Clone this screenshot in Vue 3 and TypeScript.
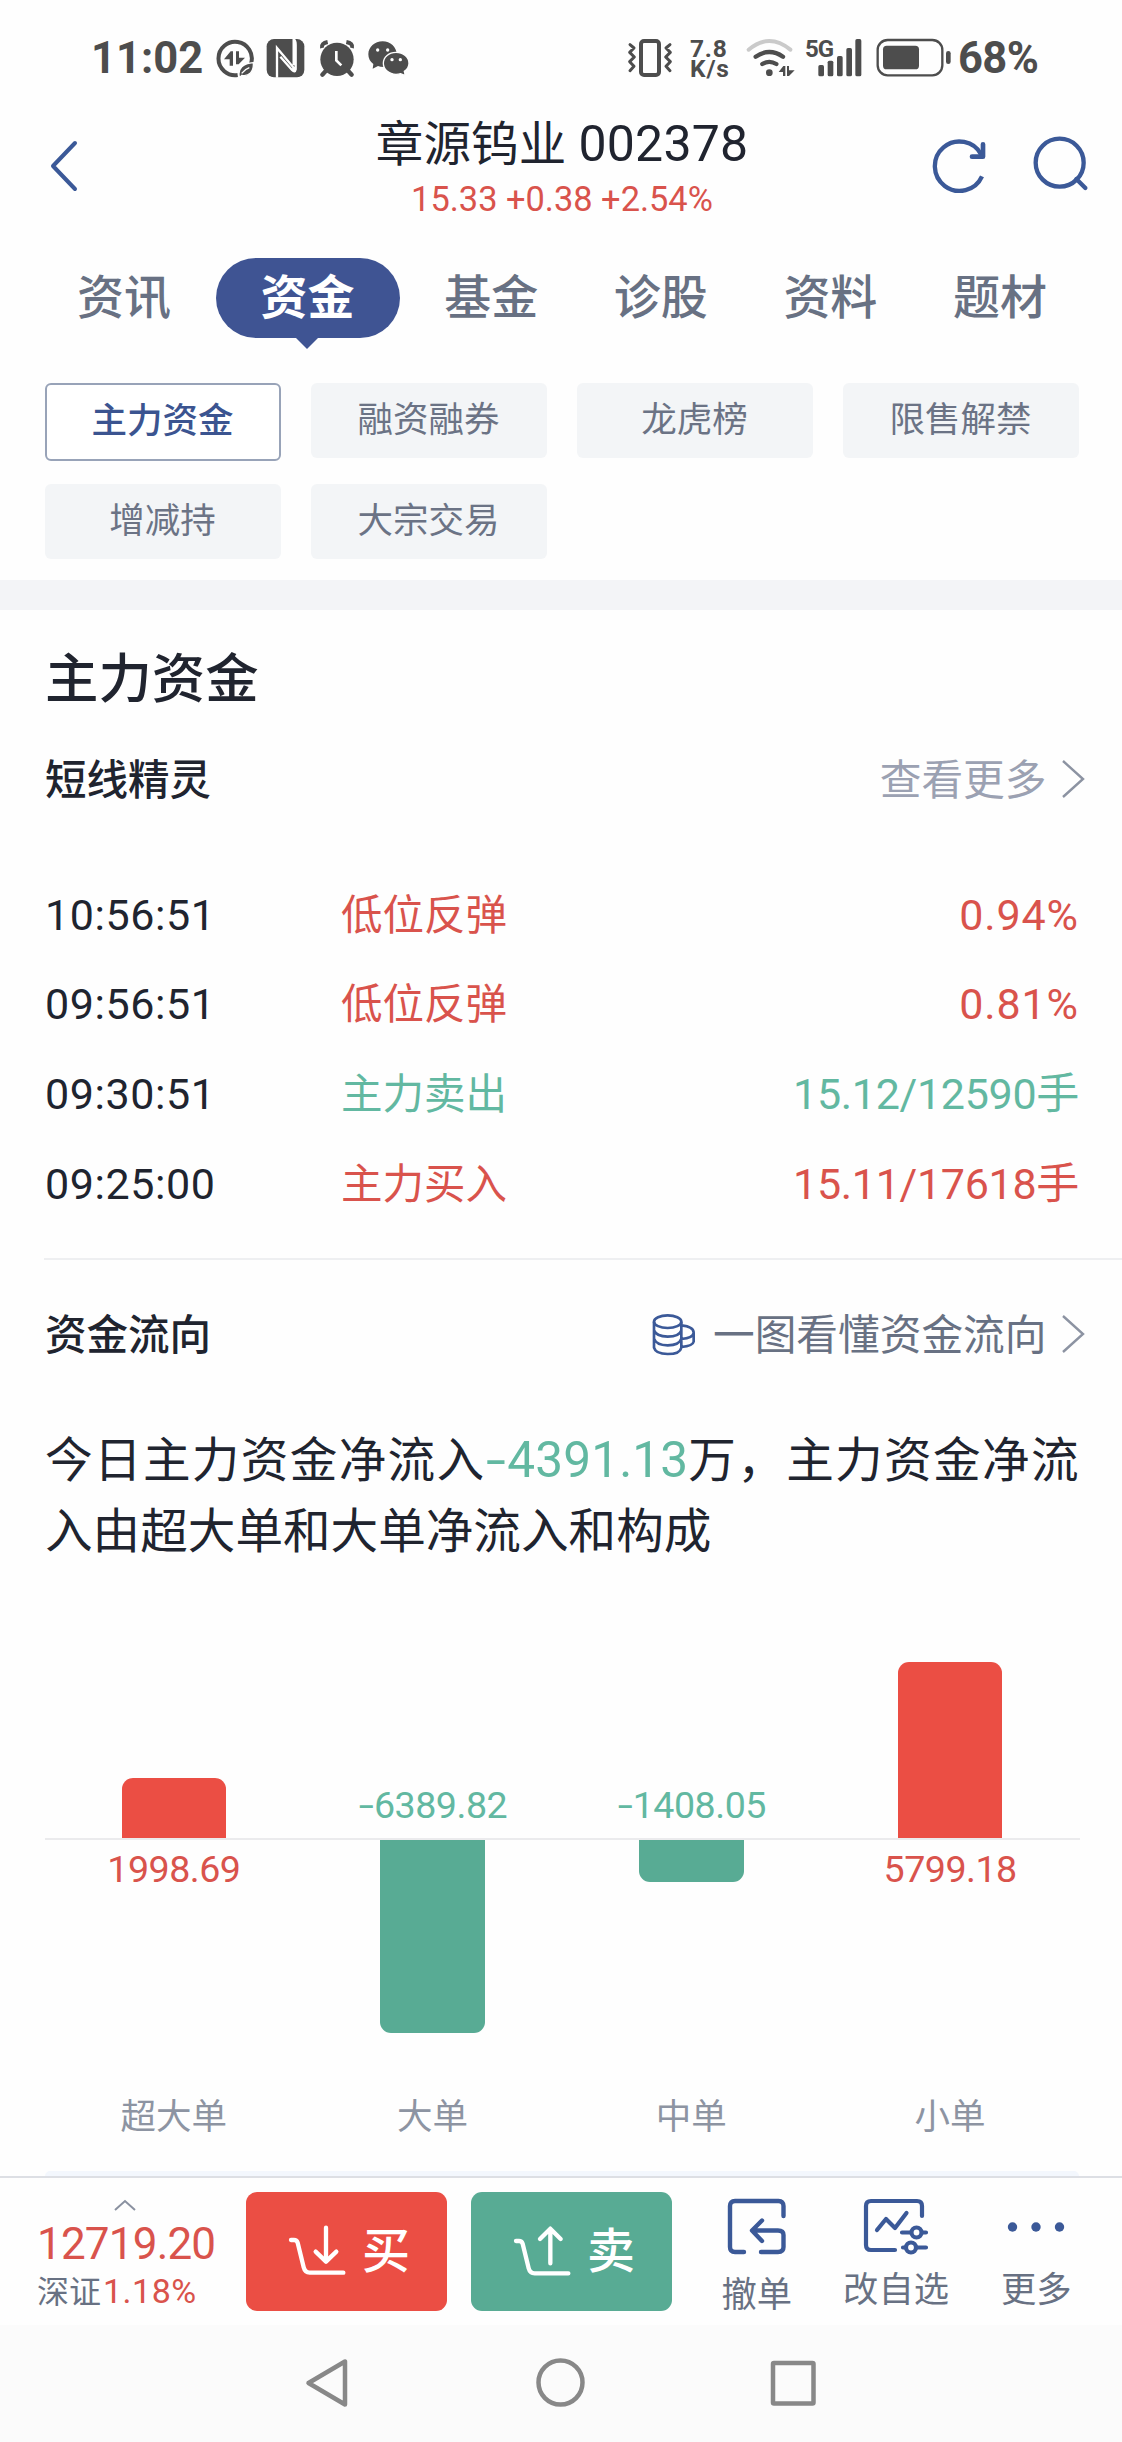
<script setup lang="ts">
interface Flow { name: string; value: string; height: number; up: boolean }
interface Signal { time: string; name: string; value: string; up: boolean }

const tabs: string[] = ['资讯', '资金', '基金', '诊股', '资料', '题材']
const chips: string[] = ['主力资金', '融资融券', '龙虎榜', '限售解禁', '增减持', '大宗交易']
const signals: Signal[] = [
  { time: '10:56:51', name: '低位反弹', value: '0.94%', up: true },
  { time: '09:56:51', name: '低位反弹', value: '0.81%', up: true },
  { time: '09:30:51', name: '主力卖出', value: '15.12/12590手', up: false },
  { time: '09:25:00', name: '主力买入', value: '15.11/17618手', up: true },
]
const flows: Flow[] = [
  { name: '超大单', value: '1998.69', height: 60, up: true },
  { name: '大单', value: '6389.82', height: 193, up: false },
  { name: '中单', value: '1408.05', height: 42.5, up: false },
  { name: '小单', value: '5799.18', height: 175.5, up: true },
]
</script>

<template>
  <div class="screen">
    <div class="status">
      <span class="clock">11:02</span>
      <svg class="st-left" width="194" height="40" viewBox="465 54 582 120" fill="#4d4d4d">
        <g>
          <path d="M573 131A50 50 0 1 0 533 165" fill="none" stroke="#4d4d4d" stroke-width="12" />
          <path d="M492 118L512 94H519V137H509V118ZM528 94H537V113H555L536 133H528Z" />
          <path d="M538 171C532 145 550 130 580 128C582 155 567 170 546 166L538 173ZM545 160Q556 147 568 143" stroke="#fff" stroke-width="4" />
        </g>
        <rect x="620" y="57" width="113" height="115" rx="22" />
        <path d="M651 173V84L700 142V154M701 56V136M701 58Q707 62 707 75V148Q705 159 696 150L661 110" fill="none" stroke="#fff" stroke-width="7" />
        <g>
          <circle cx="831" cy="118" r="50" />
          <path d="M786 84Q783 70 803 66M876 84Q880 70 859 66" fill="none" stroke="#4d4d4d" stroke-width="12" />
          <path d="M800 150L787 164M862 150L875 164" stroke="#4d4d4d" stroke-width="13" stroke-linecap="round" />
          <path d="M829 93V121L844 136" fill="none" stroke="#fff" stroke-width="8" />
        </g>
        <g>
          <path d="M940 132L938 146L954 138Q960 141 972 141C995 141 1010 122 1010 103C1010 81 991 64 968 64C944 64 925 81 925 103Q925 121 940 132Z" />
          <circle cx="953" cy="90" r="5" fill="#fff" /><circle cx="983" cy="90" r="5" fill="#fff" />
          <path d="M1033 154L1036 167L1022 161Q1016 163 1008 163C987 163 970 148 970 130C970 111 987 97 1008 97C1030 97 1047 112 1047 130Q1047 145 1033 154Z" stroke="#fff" stroke-width="4" />
          <circle cx="996" cy="119" r="5" fill="#fff" /><circle cx="1021" cy="119" r="5" fill="#fff" />
        </g>
      </svg>
      <svg class="st-vib" width="46" height="40" viewBox="82 54 138 120" fill="none" stroke="#4d4d4d">
        <rect x="124" y="63" width="54" height="102" rx="9" stroke-width="12" />
        <path d="M91 74L103 84L90 97L104 111L90 125L103 139L91 152M211 74L199 84L212 97L198 111L212 125L199 139L211 152" stroke-width="9" stroke-linecap="round" stroke-linejoin="round" />
      </svg>
      <span class="speed"><i>7.8</i><i>K/s</i></span>
      <svg class="st-wifi" width="49" height="40" viewBox="440 54 147 120" fill="none" stroke="#4d4d4d" stroke-width="13" stroke-linecap="round">
        <path d="M448 89Q510 37 573 89" stroke="#cacaca" stroke-width="12" />
        <path d="M469 110Q510 82 551 110M489 132Q510 119 531 132" />
        <circle cx="510" cy="158" r="10" fill="#4d4d4d" stroke="none" />
        <path d="M538 156L552 138H558V168H551V156ZM563 138H569V151H586L569 168H563Z" fill="#4d4d4d" stroke="none" />
      </svg>
      <span class="fiveg">5G</span>
      <svg class="st-sig" width="44" height="40" viewBox="654 54 132 120" fill="#4d4d4d">
        <rect x="655" y="135" width="17" height="34" rx="5" /><rect x="683" y="122" width="17" height="47" rx="5" />
        <rect x="711" y="108" width="17" height="61" rx="5" /><rect x="739" y="84" width="17" height="85" rx="5" />
        <rect x="766" y="57" width="18" height="112" rx="5" />
      </svg>
      <svg class="st-bat" width="76" height="40" viewBox="828 54 228 120" fill="#4d4d4d">
        <rect x="833" y="60" width="194" height="106" rx="30" fill="none" stroke="#4d4d4d" stroke-width="7" />
        <rect x="849" y="77" width="108" height="71" rx="11" />
        <rect x="1038" y="93" width="14" height="39" rx="7" />
      </svg>
      <span class="pct">68%</span>
    </div>

    <header class="header">
      <svg class="back" width="32" height="56" viewBox="0 0 32 56" fill="none" stroke="#3b5998" stroke-width="4" stroke-linecap="round" stroke-linejoin="round">
        <path d="M27 5L5 28L27 51" />
      </svg>
      <div class="heading">
        <div class="title">章源钨业 <span>002378</span></div>
        <div class="quote">15.33 +0.38 +2.54%</div>
      </div>
      <svg class="tools" width="160" height="60" viewBox="90 75 480 180" fill="none" stroke="#3b5998" stroke-width="13">
        <path d="M246 199A74 74 0 1 1 244 134" />
        <path d="M249 103V140H216" stroke-width="14" stroke-linecap="round" stroke-linejoin="round" />
        <circle cx="479" cy="158" r="72" />
        <path d="M529 207L556 234" stroke-linecap="round" />
      </svg>
    </header>

    <nav class="tabs">
      <div v-for="(t, i) in tabs" :key="t" class="tab" :class="{ on: i === 1 }">{{ t }}</div>
    </nav>

    <div class="chips">
      <div v-for="(c, i) in chips" :key="c" class="chip" :class="{ on: i === 0 }">{{ c }}</div>
    </div>
    <div class="band"></div>

    <h1 class="section-title">主力资金</h1>

    <div class="subhead">
      <h2>短线精灵</h2>
      <span class="more light">查看更多</span>
      <svg class="chev light" width="24" height="44" viewBox="0 0 24 44"><path d="M2 4L22 22L2 40" /></svg>
    </div>

    <div class="signals">
      <div v-for="s in signals" :key="s.time" class="signal">
        <span class="time">{{ s.time }}</span>
        <span class="name" :class="s.up ? 'red' : 'green'">{{ s.name }}</span>
        <span class="val" :class="[s.up ? 'red' : 'green', { ratio: s.value.endsWith('%') }]">{{ s.value }}</span>
      </div>
    </div>
    <div class="divider"></div>

    <div class="subhead second">
      <h2>资金流向</h2>
      <svg class="coins" width="44" height="44" viewBox="37 41 132 132" fill="none" stroke="#3b5998" stroke-width="8">
        <ellipse cx="84" cy="67" rx="41" ry="19" />
        <path d="M43 67V145Q48 164 84 164Q121 164 125 145V67M43 93Q50 112 84 112Q119 112 125 93M43 118Q50 138 84 138Q119 138 125 118M125 78Q162 82 162 100V127Q160 140 125 143M162 101Q160 116 125 119" />
      </svg>
      <span class="more">一图看懂资金流向</span>
      <svg class="chev" width="24" height="44" viewBox="0 0 24 44"><path d="M2 4L22 22L2 40" /></svg>
    </div>

    <p class="summary">
      <span class="l1">今日主力资金净流入<b><i class="minus">-</i>4391.13</b>万，主力资金净流</span>
      <span class="l2">入由超大单和大单净流入和构成</span>
    </p>

    <div class="chart">
      <div v-for="f in flows" :key="f.name" class="col">
        <div class="upper">
          <div v-if="f.up" class="bar up" :style="{ height: f.height + 'px' }"></div>
          <span v-else class="num green"><i class="minus">-</i>{{ f.value }}</span>
        </div>
        <div class="lower">
          <span v-if="f.up" class="num red">{{ f.value }}</span>
          <div v-else class="bar down" :style="{ height: f.height + 'px' }"></div>
        </div>
        <div class="cat">{{ f.name }}</div>
      </div>
    </div>
    <div class="strip"></div>

    <footer class="actions">
      <div class="index">
        <svg width="22" height="12" viewBox="0 0 22 12" fill="none" stroke="#8a91a0" stroke-width="2"><path d="M1 11L11 2L21 11" /></svg>
        <div class="point">12719.20</div>
        <div class="rate">深证<em>1.18%</em></div>
      </div>
      <div class="btn buy">
        <svg width="60" height="54" viewBox="864 190 180 162" fill="none" stroke="#fff" stroke-width="13" stroke-linecap="round" stroke-linejoin="round">
          <path d="M873 238H882Q890 238 893 246L911 320Q915 336 929 336H1030M978 201V300M947 273L978 303L1009 273" />
        </svg>
        <span>买</span>
      </div>
      <div class="btn sell">
        <svg width="60" height="54" viewBox="864 190 180 162" fill="none" stroke="#fff" stroke-width="13" stroke-linecap="round" stroke-linejoin="round">
          <path d="M873 241H882Q890 241 893 249L911 323Q915 338 929 338H1030M976 308V205M945 235L976 204L1007 235" />
        </svg>
        <span>卖</span>
      </div>
      <div class="act cancel">
        <svg width="64" height="62" viewBox="0 0 64 62" fill="none" stroke="#3b5998" stroke-width="4.4" stroke-linecap="round" stroke-linejoin="round">
          <path d="M58.500 20V10Q58.500 5 53.500 5H10Q5 5 5 10V51Q5 56 10 56H19M36 56H53Q58.500 56 58.500 51V39Q58.500 34.500 53 34.500H28M37 24.500L27 34.500L37 45" />
        </svg>
        <span>撤单</span>
      </div>
      <div class="act edit">
        <svg width="70" height="62" viewBox="0 0 70 62" fill="none" stroke="#3b5998" stroke-width="4.200" stroke-linecap="round" stroke-linejoin="round">
          <path d="M61 20V10Q61 5 56 5H10Q5 5 5 10V49Q5 54 10 54H34M16 34L25 23L34 32L45.500 17M41 36.500H49M61 36.500H65M42 51.500H44M56 51.500H65" />
          <circle cx="55.500" cy="36.500" r="5" /><circle cx="50" cy="51.500" r="5" />
        </svg>
        <span>改自选</span>
      </div>
      <div class="act dots">
        <svg width="64" height="62" viewBox="0 0 64 62" fill="#3b5998"><circle cx="8.500" cy="31" r="4.700" /><circle cx="32" cy="31" r="4.700" /><circle cx="55.500" cy="31" r="4.700" /></svg>
        <span>更多</span>
      </div>
    </footer>

    <div class="sysnav">
      <svg width="520" height="56" viewBox="0 0 520 56" fill="none" stroke="#888" stroke-width="4.500" stroke-linejoin="round">
        <path d="M7.500 28L44 6.500V49.500Z" />
        <circle cx="259.500" cy="27.500" r="22" />
        <rect x="472" y="8" width="40.500" height="40.500" rx="1" />
      </svg>
    </div>
  </div>
</template>

<style>
body { margin: 0; background: #fff; }
</style>

<style scoped>
.screen { width: 1122px; height: 2442px; overflow: hidden; display: flex; flex-direction: column; background: #fefefe; font-family: Roboto, "Noto Sans CJK SC", sans-serif; color: #20242f; }
.screen > * { flex: none; box-sizing: border-box; }
svg { display: block; flex: none; }
i, em { font-style: normal; }
.red { color: #d9534c; }
.green { color: #62b8a1; }

.status { height: 115px; display: flex; align-items: center; color: #4d4d4d; font-weight: 700; padding-left: 91px; white-space: nowrap; }
.clock { width: 124px; font-size: 43.5px; line-height: 60px; margin-top: 2px; }
.st-left { margin-top: 1px; }
.st-vib { margin: 1px 0 0 218px; }
.speed { width: 40px; margin: 3px 0 0 17px; display: flex; flex-direction: column; font-size: 24.5px; line-height: 20px; }
.speed i { letter-spacing: 0.8px; }
.st-wifi { margin: 1px 0 0 16px; }
.fiveg { width: 13px; font-size: 24px; line-height: 24px; margin: -18px 0 0 10px; letter-spacing: -1px; overflow: visible; }
.st-sig { margin-top: 1px; }
.st-bat { margin: 1px 0 0 14px; }
.pct { font-size: 43.5px; line-height: 60px; margin: 2px 0 0 6px; letter-spacing: -0.6px; }

.header { height: 120px; display: flex; align-items: flex-start; padding-left: 48px; }
.back { margin-top: 23px; }
.heading { width: 482px; margin-left: 241px; text-align: center; white-space: nowrap; }
.title { font-size: 47.5px; line-height: 60px; letter-spacing: 0.2px; }
.title span { font-size: 50px; line-height: 1; }
.quote { margin-top: 1px; font-size: 34.4px; line-height: 46px; color: #d9534c; }
.tools { margin: 20px 0 0 127px; }

.tabs { margin-top: 23px; height: 80px; padding-left: 46px; display: flex; gap: 13.6px; }
.tab { box-sizing: border-box; width: 156px; text-align: center; font-size: 47px; line-height: 79px; color: #687183; font-weight: 500; white-space: nowrap; }
.tab.on { position: relative; width: 184px; height: 80px; border-radius: 40px; background: #3f5493; color: #fff; font-weight: 700; }
.tab.on::after { content: ""; position: absolute; left: 79px; top: 79px; border: 12.5px solid transparent; border-top: 12px solid #3f5493; border-bottom: 0; }

.chips { margin: 45px 0 0 44.5px; display: grid; grid-template-columns: repeat(4, 236px); grid-template-rows: 75px 75px; gap: 26px 30px; }
.chip { box-sizing: border-box; border-radius: 6px; background: #f3f5f7; font-size: 35.5px; line-height: 75px; text-align: center; color: #6b7385; }
.chip.on { height: 78px; background: #fff; border: 2px solid #98a3b8; line-height: 73px; color: #3b5490; font-weight: 500; }
.band { margin-top: 21px; height: 30px; background: #f3f4f7; }

.section-title { margin: 30px 0 0 45px; font-size: 53.4px; line-height: 80px; font-weight: 500; }
.subhead { margin-top: 31px; height: 60px; padding: 0 37px 0 45px; display: flex; align-items: center; white-space: nowrap; }
.subhead h2 { margin: 0 auto 0 0; font-size: 41.5px; line-height: 60px; font-weight: 500; }
.more { font-size: 41.7px; line-height: 60px; color: #687183; }
.more.light { color: #9ba1b2; }
.chev { margin: -4px 0 0 14.5px; fill: none; stroke: #8c93a2; stroke-width: 2.4px; }
.signals { margin-top: 59.5px; padding: 0 43px 0 45px; }
.signal { display: flex; height: 89.7px; line-height: 89.7px; font-size: 43px; white-space: nowrap; }
.time { width: 296px; letter-spacing: 0.6px; }
.name { font-size: 41.5px; }
.val { margin-left: auto; letter-spacing: -0.3px; }
.val.ratio { letter-spacing: 0.9px; }
.divider { margin: 28.5px 0 0 44px; height: 2px; background: #eeeff1; }
.second { margin-top: 46px; }
.coins { margin-right: 17px; margin-top: -1px; }

.summary { margin: 60.5px 0 0 45px; font-size: 47.6px; line-height: 71px; white-space: nowrap; }
.summary span { display: block; }
.l1 { letter-spacing: 1.35px; }
.summary b { font-weight: 400; font-size: 49.5px; line-height: 1; letter-spacing: 0.15px; color: #62b8a1; }
.minus { display: inline-block; transform: scaleX(1.45); line-height: 1; margin: 0 0.08em; }

.chart { margin: 31.5px 0 0 44.5px; width: 1035px; height: 547px; display: flex; }
.col { flex: 1; display: flex; flex-direction: column; align-items: center; }
.upper { width: 100%; height: 240px; box-sizing: border-box; border-bottom: 2px solid #ebebed; display: flex; flex-direction: column; align-items: center; justify-content: flex-end; }
.lower { width: 100%; height: 247px; display: flex; flex-direction: column; align-items: center; }
.bar { width: 104.500px; }
.up { background: #eb4e44; border-radius: 11px 11px 0 0; }
.down { background: #58ab94; border-radius: 0 0 11px 11px; }
.num { font-size: 37.6px; line-height: 40px; letter-spacing: -0.5px; margin: 9.5px 0 12.5px; }
.cat { font-size: 35.5px; line-height: 60px; color: #8d94a2; }
.strip { margin: 24px 0 0 45px; width: 1034px; height: 5px; border-radius: 5px 5px 0 0; background: #f3f7fd; }

.actions { height: 149px; border-top: 2px solid #dddfe4; display: flex; align-items: flex-start; white-space: nowrap; background: #fefefe; }
.index { width: 246px; padding: 21px 0 0 37px; box-sizing: border-box; }
.index svg { margin-left: 77px; }
.point { margin-top: 10px; font-size: 44px; line-height: 46px; letter-spacing: -0.8px; color: #d9534c; }
.rate { margin-top: 2px; font-size: 32px; line-height: 46px; color: #687183; }
.rate em { font-size: 34px; line-height: 1; color: #d9534c; margin-left: 2px; letter-spacing: 0.5px; }
.btn { box-sizing: border-box; width: 201px; height: 119px; margin-top: 14px; padding-left: 42px; border-radius: 11px; display: flex; align-items: center; color: #fff; font-size: 48px; font-weight: 500; line-height: 119px; }
.btn span { margin-left: 14px; }
.buy { background: #eb4e44; }
.sell { background: #58ab94; margin-left: 24px; }
.act { display: flex; flex-direction: column; align-items: center; font-size: 35.3px; line-height: 50px; color: #687183; padding-top: 18px; }
.act span { margin-top: 7.5px; }
.cancel { margin-left: 49.5px; }
.cancel span { margin-top: 12.5px; }
.edit { margin-left: 51px; }
.dots { margin-left: 52px; }
.sysnav { flex: 1 !important; background: #fbfbfb; padding: 30px 0 0 301px; }
</style>
